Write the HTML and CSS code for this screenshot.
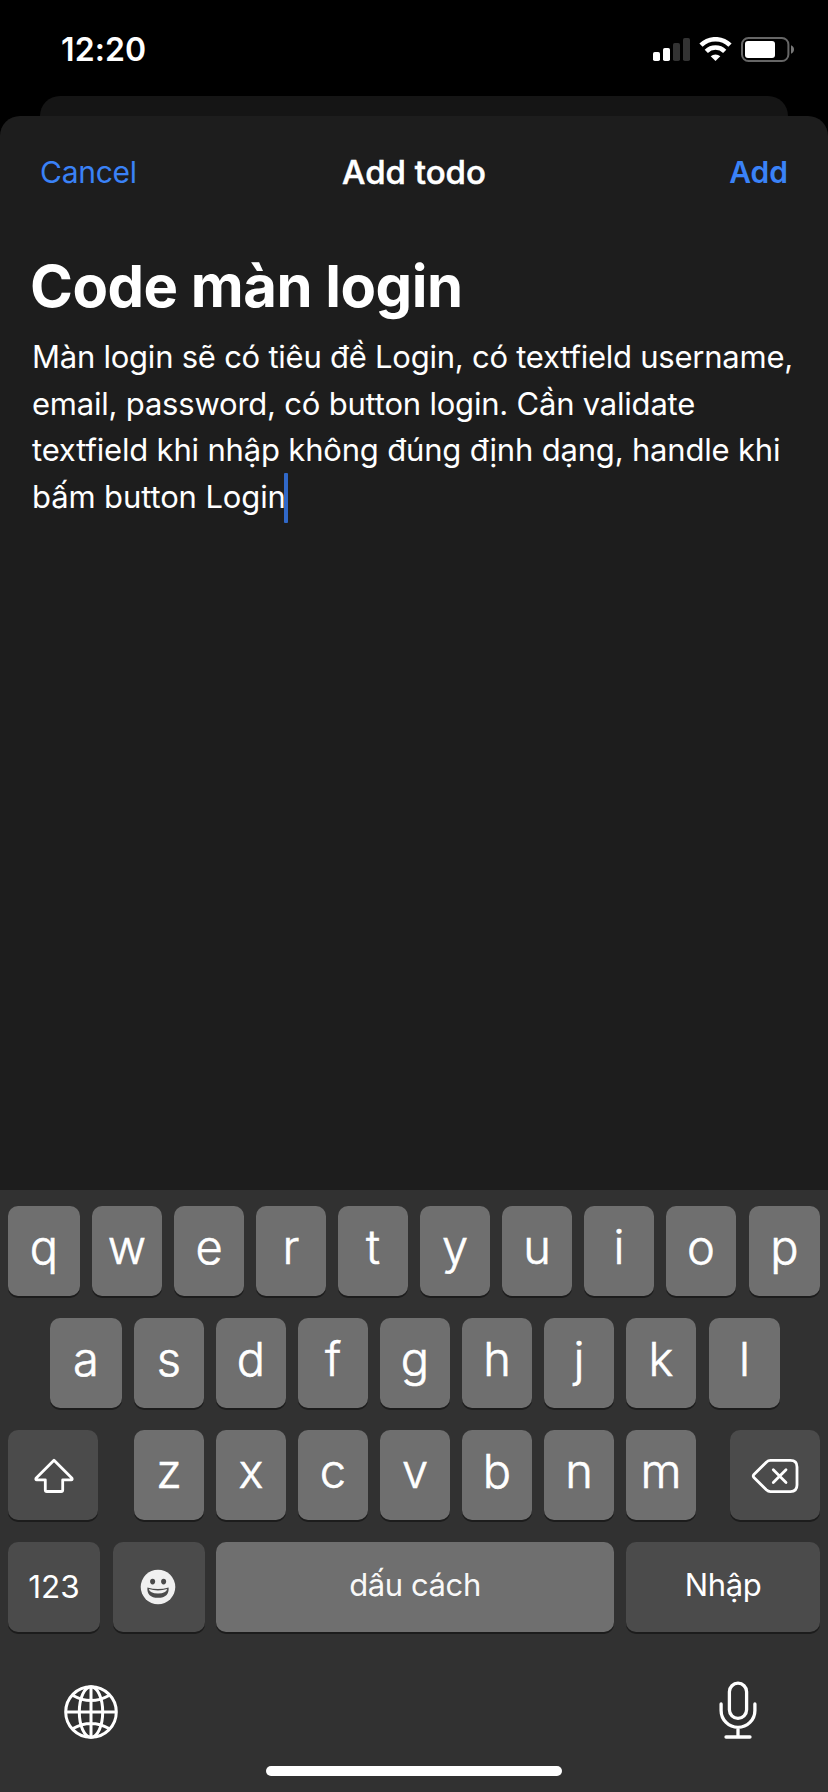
FILE: index.html
```html
<!DOCTYPE html>
<html lang="vi">
<head>
<meta charset="utf-8">
<title>Add todo</title>
<link rel="stylesheet" href="styles.css">
</head>
<body>
<div class="phone">
  <header class="status">
    <span class="time">12:20</span>
    <div class="indicators">
      <svg class="signal" width="38" height="24" viewBox="0 0 38 24">
        <rect x="0" y="14" width="7" height="9" rx="1.8" fill="#fff"/>
        <rect x="10" y="10" width="7" height="13" rx="1.8" fill="#fff"/>
        <rect x="20" y="5" width="7" height="18" rx="1.8" fill="#333"/>
        <rect x="30" y="0" width="7" height="23" rx="1.8" fill="#333"/>
      </svg>
      <svg class="wifi" width="33" height="24" viewBox="0 0 33 24" fill="none" stroke="#fff">
        <path d="M2 8.2 A20.6 20.6 0 0 1 31 8.2" stroke-width="4.6"/>
        <path d="M7.3 14.3 A13.2 13.2 0 0 1 25.7 14.3" stroke-width="4.6"/>
        <path d="M16.5 24 L11.7 19.3 A7 7 0 0 1 21.3 19.3 Z" fill="#fff" stroke="none"/>
      </svg>
      <svg class="battery" width="54" height="26" viewBox="0 0 54 26">
        <rect x="1" y="1" width="46.4" height="23" rx="6.5" fill="none" stroke="#666" stroke-width="2"/>
        <rect x="4" y="4" width="30" height="17" rx="3" fill="#fff"/>
        <path d="M50 8.3 Q53 9.6 53 12.5 T50 16.7 Z" fill="#777"/>
      </svg>
    </div>
  </header>
  <div class="back-sheet"></div>
  <main class="sheet">
    <nav class="navbar">
      <a class="cancel">Cancel</a>
      <h2 class="nav-title">Add todo</h2>
      <a class="add">Add</a>
    </nav>
    <h1 class="heading">Code màn login</h1>
    <p class="body">
      <span class="line l1">Màn login sẽ có tiêu đề Login, có textfield username,</span>
      <span class="line l2">email, password, có button login. Cần validate</span>
      <span class="line l3">textfield khi nhập không đúng định dạng, handle khi</span>
      <span class="line l4">bấm button Login<i class="caret"></i></span>
    </p>
  </main>
  <section class="keyboard">
    <div class="row top">
      <button class="key wide">q</button><button class="key">w</button><button class="key">e</button><button class="key">r</button><button class="key">t</button><button class="key">y</button><button class="key">u</button><button class="key">i</button><button class="key">o</button><button class="key last">p</button>
    </div>
    <div class="row middle">
      <button class="key wide">a</button><button class="key">s</button><button class="key">d</button><button class="key">f</button><button class="key">g</button><button class="key">h</button><button class="key">j</button><button class="key">k</button><button class="key last">l</button>
    </div>
    <div class="row">
      <button class="key dark shift">
        <svg width="40" height="36" viewBox="0 0 40 36" fill="none" stroke="#fff" stroke-width="2.8" stroke-linejoin="round"><path d="M20 2.2 L38 20.3 Q38.6 21.8 37.3 21.8 H28.7 V32 Q28.7 33.5 27.2 33.5 H12.8 Q11.3 33.5 11.3 32 V21.8 H2.7 Q1.4 21.8 2 20.3 Z"/></svg>
      </button>
      <div class="letters">
        <button class="key">z</button><button class="key">x</button><button class="key">c</button><button class="key">v</button><button class="key">b</button><button class="key">n</button><button class="key">m</button>
      </div>
      <button class="key dark del">
        <svg width="48" height="36" viewBox="0 0 48 36" fill="none" stroke="#fff" stroke-width="2.8" stroke-linejoin="round" stroke-linecap="round"><path d="M19.5 2.4 H39.5 Q46 2.4 46 8.9 V27.1 Q46 33.6 39.5 33.6 H19.5 Q17.2 33.6 15.3 31.8 L2.9 19.4 Q1.5 18 2.9 16.6 L15.3 4.2 Q17.2 2.4 19.5 2.4 Z"/><path d="M22.3 11.8 L35 24.4 M35 11.8 L22.3 24.4"/></svg>
      </button>
    </div>
    <div class="row bottom">
      <button class="key dark num">123</button>
      <button class="key dark emoji">
        <svg width="36" height="36" viewBox="0 0 36 36">
          <circle cx="18" cy="18" r="17.3" fill="#f0f0f0"/>
          <ellipse cx="12.6" cy="12.6" rx="2.5" ry="2.8" fill="#4b4b4b"/>
          <ellipse cx="23.6" cy="12.6" rx="2.5" ry="2.8" fill="#4b4b4b"/>
          <path d="M7.4 18.4 Q18 21.6 28.6 18.4 Q29.4 28.6 18 28.8 Q6.6 28.6 7.4 18.4 Z" fill="#4b4b4b"/>
          <path d="M8.8 20.1 Q18 22.7 27.2 20.1 Q26.2 24.4 18 24.6 Q9.8 24.4 8.8 20.1 Z" fill="#f0f0f0"/>
        </svg>
      </button>
      <button class="key space">dấu cách</button>
      <button class="key dark enter">Nhập</button>
    </div>
    <div class="tools">
      <svg width="54" height="54" viewBox="0 0 54 54" fill="none" stroke="#fff" stroke-width="3">
        <circle cx="27" cy="27" r="25.3"/>
        <ellipse cx="27" cy="27" rx="11.7" ry="25.3"/>
        <path d="M27 2 V52 M2 27 H52 M9 10.5 Q27 20.6 45 10.5 M9 43.5 Q27 33.4 45 43.5"/>
      </svg>
      <svg width="38" height="58" viewBox="0 0 38 58" fill="none" stroke="#fff" stroke-width="3.3" stroke-linecap="round">
        <rect x="10.4" y="2.2" width="17.2" height="35.2" rx="8.6"/>
        <path d="M2.1 23 V29.5 A16.9 16.9 0 0 0 35.9 29.5 V23 M19 46.4 V56 M7 56 H31"/>
      </svg>
    </div>
    <div class="home"></div>
  </section>
</div>
</body>
</html>
```
FILE: styles.css
```css
* { box-sizing: border-box; }
body { margin: 0; background: #000; font-family: Inter, "Noto Sans", sans-serif; color: #fff; }
.phone { width: 828px; height: 1792px; display: flex; flex-direction: column; overflow: hidden; }
.status { height: 96px; flex: none; display: flex; justify-content: space-between; align-items: flex-start; padding: 37px 33px 0 61px; }
.time { font-size: 32px; line-height: 26px; font-weight: 600; letter-spacing: 0.1px; }
.indicators { display: flex; align-items: flex-start; }
.signal { margin: 1px 8px 0 0; }
.wifi { margin-right: 9px; }
.back-sheet { height: 40px; margin: 0 40px -20px; flex: none; background: #151515; border-radius: 20px 20px 0 0; }
.sheet { height: 1074px; flex: none; position: relative; background: #1d1d1d; border-radius: 20px 20px 0 0; }
.navbar { height: 112px; display: grid; grid-template-columns: 1fr auto 1fr; align-items: center; padding: 0 40px; color: #3a82f7; font-size: 30px; white-space: nowrap; }
.cancel { letter-spacing: -0.25px; }
.nav-title { margin: 0; color: #fff; font-size: 33px; font-weight: 500; letter-spacing: 0; -webkit-text-stroke: 0.5px #fff; }
.add { justify-self: end; font-weight: 600; }
.heading { margin: 23px 0 0 30px; font-size: 58px; line-height: 70px; font-weight: 700; letter-spacing: -0.5px; white-space: nowrap; }
.body { margin: 13px 0 0 32px; font-size: 31px; line-height: 46.6px; }
.line { display: block; width: max-content; white-space: nowrap; }
.l1 { letter-spacing: -0.24px; }
.l2 { letter-spacing: -0.21px; }
.l3 { letter-spacing: -0.18px; }
.l4 { letter-spacing: -0.12px; }
.caret { display: inline-block; width: 4px; height: 50px; margin: -6px 0 -14px -2px; vertical-align: -1px; border-radius: 1px; background: #3068c8; }
.keyboard { height: 602px; flex: none; background: #313131; padding: 16px 8px 0; display: flex; flex-direction: column; position: relative; }
.row { display: flex; gap: 12px; height: 90px; margin-bottom: 22px; flex: none; }
.middle { padding-left: 42px; }
.letters { display: flex; gap: 12px; margin: 0 22px 0 24px; -webkit-text-stroke: 0.6px #fff; }
.top, .middle { -webkit-text-stroke: 0.6px #fff; }
.key { width: 70px; height: 90px; flex: none; padding: 0 0 8px; border: 0; border-radius: 10px; background: #6f6f6f; box-shadow: 0 2px 0 #1c1c1c; color: #fff; font-family: inherit; font-size: 47px; line-height: 82px; font-weight: 300; text-align: center; white-space: nowrap; }
.wide { width: 72px; }
.last { margin-left: 1px; width: 71px; }
.dark { background: #4b4b4b; }
.shift, .del { width: 90px; padding: 2px 0 0; line-height: 0; }
.shift { padding-left: 2px; }
.num, .emoji { width: 92px; }
.num { padding: 0; font-size: 31.5px; line-height: 90px; font-weight: 400; }
.emoji { margin-left: 1px; padding: 0 3px 0 0; line-height: 0; }
.space, .enter { font-size: 31px; line-height: 86px; padding: 0 0 4px; font-weight: 400; letter-spacing: -0.4px; }
.space { width: 398px; margin-left: -1px; color: #f8f8f8; }
.enter { width: 194px; }
.tools { display: flex; justify-content: space-between; align-items: flex-start; padding: 27px 63px 0 56px; }
.tools svg:first-child { margin-top: 4px; }
.home { align-self: center; margin-top: 27px; width: 296px; height: 10px; border-radius: 5px; background: #fff; }
```
